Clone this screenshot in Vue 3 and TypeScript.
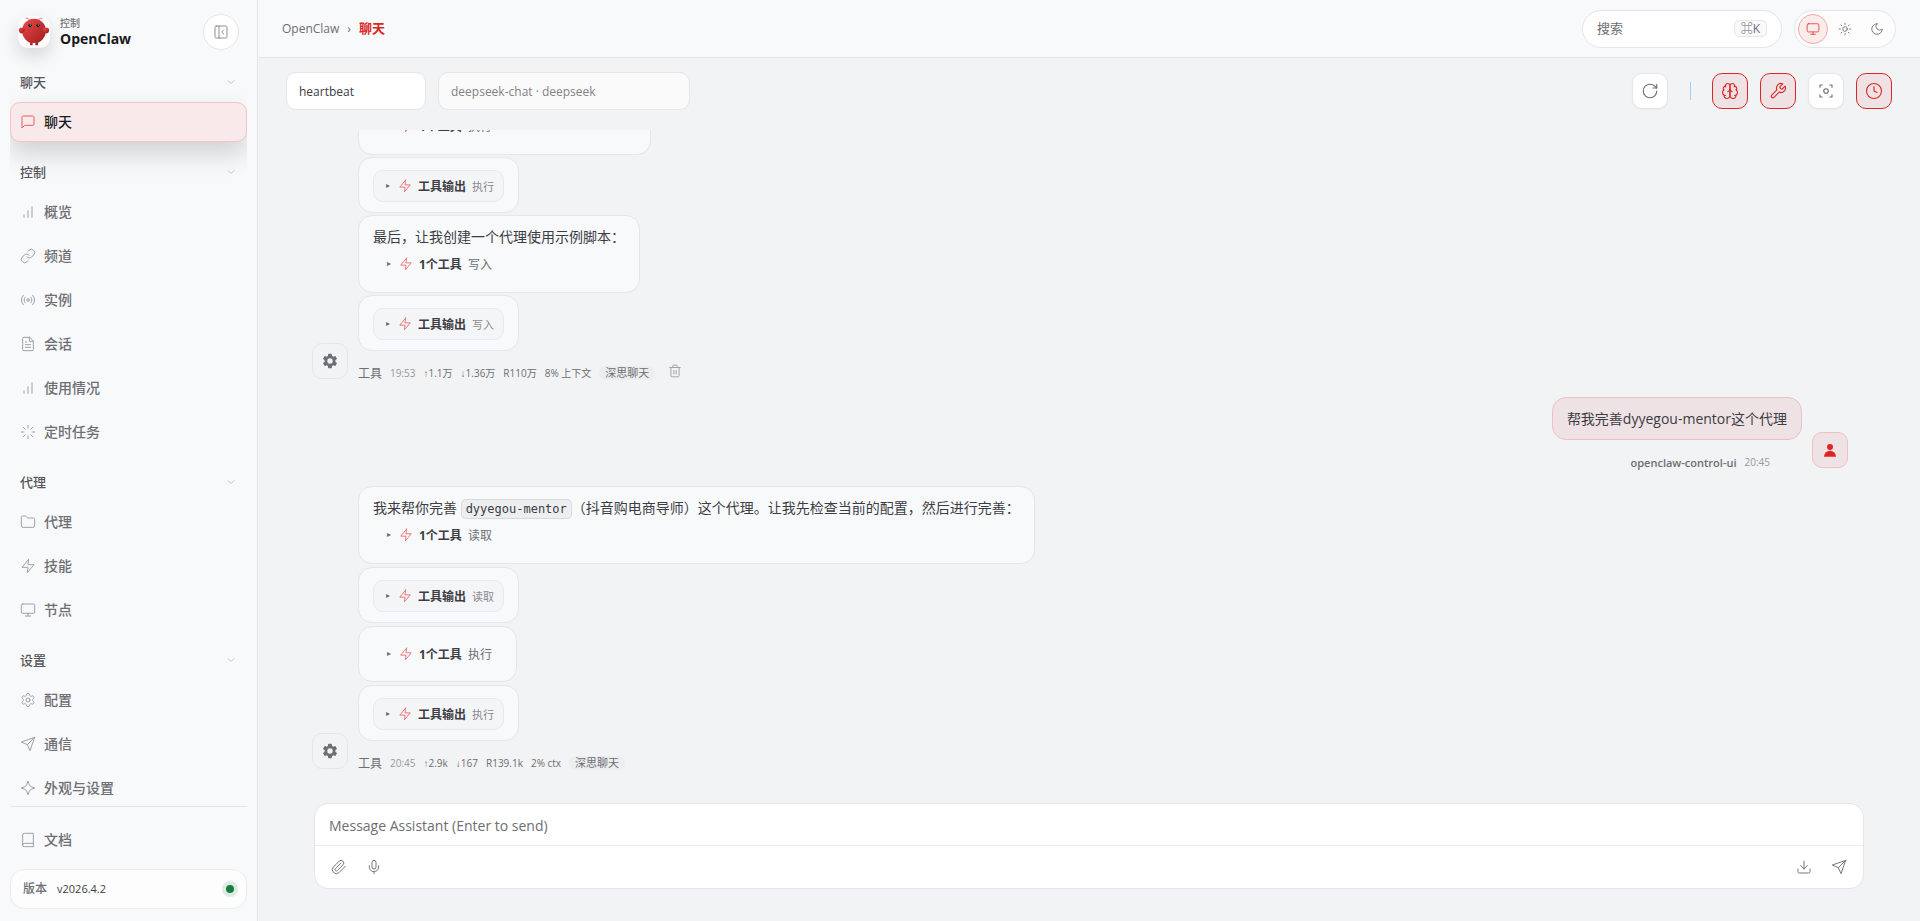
<script setup lang="ts">
import { ref } from 'vue'

interface NavItem { label: string; icon: string; active?: boolean }
interface NavSection { title: string; items: NavItem[] }
interface Tool { output: boolean; title: string; name: string }
interface Bubble { text?: string; code?: string; after?: string; wide?: boolean; tool?: Tool }
interface Group {
  user: boolean
  latest?: boolean
  deletable?: boolean
  name: string
  time: string
  stats: string[]
  model?: string
  bubbles: Bubble[]
}

const icons: Record<string, string> = {
  chat: '<path d="M21 15a2 2 0 0 1-2 2H7l-4 4V5a2 2 0 0 1 2-2h14a2 2 0 0 1 2 2z"/>',
  chart: '<path d="M12 20V10M18 20V4M6 20v-4"/>',
  link: '<path d="M10 13a5 5 0 0 0 7.54.54l3-3a5 5 0 0 0-7.07-7.07l-1.72 1.71"/><path d="M14 11a5 5 0 0 0-7.54-.54l-3 3a5 5 0 0 0 7.07 7.07l1.71-1.71"/>',
  radio: '<circle cx="12" cy="12" r="2"/><path d="M16.24 7.76a6 6 0 0 1 0 8.49m-8.48-.01a6 6 0 0 1 0-8.49m11.31-2.82a10 10 0 0 1 0 14.14m-14.14 0a10 10 0 0 1 0-14.14"/>',
  file: '<path d="M14.5 2H6a2 2 0 0 0-2 2v16a2 2 0 0 0 2 2h12a2 2 0 0 0 2-2V7.5L14.5 2z"/><path d="M14 2v6h6M16 13H8M16 17H8M10 9H8"/>',
  loader: '<path d="M12 2v4M12 18v4M4.93 4.93l2.83 2.83M16.24 16.24l2.83 2.83M2 12h4M18 12h4M4.93 19.07l2.83-2.83M16.24 7.76l2.83-2.83"/>',
  folder: '<path d="M20 20a2 2 0 0 0 2-2V8a2 2 0 0 0-2-2h-7.9a2 2 0 0 1-1.69-.9L9.6 3.9A2 2 0 0 0 7.93 3H4a2 2 0 0 0-2 2v13a2 2 0 0 0 2 2Z"/>',
  zap: '<path d="M13 2 3 14h9l-1 8 10-12h-9l1-8z"/>',
  monitor: '<rect x="2" y="3" width="20" height="14" rx="2"/><path d="M8 21h8M12 17v4"/>',
  settings: '<path d="M12.22 2h-.44a2 2 0 0 0-2 2v.18a2 2 0 0 1-1 1.73l-.43.25a2 2 0 0 1-2 0l-.15-.08a2 2 0 0 0-2.73.73l-.22.38a2 2 0 0 0 .73 2.73l.15.1a2 2 0 0 1 1 1.72v.51a2 2 0 0 1-1 1.74l-.15.09a2 2 0 0 0-.73 2.73l.22.38a2 2 0 0 0 2.73.73l.15-.08a2 2 0 0 1 2 0l.43.25a2 2 0 0 1 1 1.73V20a2 2 0 0 0 2 2h.44a2 2 0 0 0 2-2v-.18a2 2 0 0 1 1-1.73l.43-.25a2 2 0 0 1 2 0l.15.08a2 2 0 0 0 2.73-.73l.22-.39a2 2 0 0 0-.73-2.73l-.15-.08a2 2 0 0 1-1-1.74v-.5a2 2 0 0 1 1-1.74l.15-.09a2 2 0 0 0 .73-2.73l-.22-.38a2 2 0 0 0-2.73-.73l-.15.08a2 2 0 0 1-2 0l-.43-.25a2 2 0 0 1-1-1.73V4a2 2 0 0 0-2-2z"/><circle cx="12" cy="12" r="3"/>',
  send: '<path d="m22 2-7 20-4-9-9-4 20-7zM22 2 11 13"/>',
  spark: '<path d="M12 2l2.2 5.8c.3.9 1 1.6 1.9 1.9L22 12l-5.9 2.3c-.9.3-1.6 1-1.9 1.9L12 22l-2.2-5.8c-.3-.9-1-1.6-1.9-1.9L2 12l5.9-2.3c.9-.3 1.6-1 1.9-1.9z"/>',
  book: '<path d="M4 19.5v-15A2.5 2.5 0 0 1 6.5 2H20v20H6.5a2.5 2.5 0 0 1 0-5H20"/>',
  chevron: '<path d="m6 9 6 6 6-6"/>',
  panel: '<rect x="3" y="3" width="18" height="18" rx="2"/><path d="M9 3v18M16 15l-3-3 3-3"/>',
  sun: '<circle cx="12" cy="12" r="4"/><path d="M12 2v2M12 20v2M4.93 4.93l1.41 1.41M17.66 17.66l1.41 1.41M2 12h2M20 12h2M6.34 17.66l-1.41 1.41M19.07 4.93l-1.41 1.41"/>',
  moon: '<path d="M12 3a6 6 0 0 0 9 9 9 9 0 1 1-9-9z"/>',
  refresh: '<path d="M21 12a9 9 0 1 1-9-9c2.52 0 4.93 1 6.74 2.74L21 8"/><path d="M21 3v5h-5"/>',
  brain: '<path d="M12 5a3 3 0 1 0-5.997.125 4 4 0 0 0-2.526 5.77 4 4 0 0 0 .556 6.588A4 4 0 1 0 12 18Z"/><path d="M12 5a3 3 0 1 1 5.997.125 4 4 0 0 1 2.526 5.77 4 4 0 0 1-.556 6.588A4 4 0 1 1 12 18Z"/><path d="M15 13a4.5 4.5 0 0 1-3-4 4.5 4.5 0 0 1-3 4M17.6 6.5a3 3 0 0 0 .4-1.4M6 5.1a3 3 0 0 0 .4 1.4M3.5 10.9a4 4 0 0 1 .6-.4M19.9 10.5a4 4 0 0 1 .6.4M6 18a4 4 0 0 1-2-.5M20 17.5a4 4 0 0 1-2 .5"/>',
  wrench: '<path d="M14.7 6.3a1 1 0 0 0 0 1.4l1.6 1.6a1 1 0 0 0 1.4 0l3.77-3.77a6 6 0 0 1-7.94 7.94l-6.91 6.91a2.12 2.12 0 0 1-3-3l6.91-6.91a6 6 0 0 1 7.94-7.94l-3.76 3.76z"/>',
  focus: '<path d="M4 7V4h3M17 4h3v3M20 17v3h-3M7 20H4v-3"/><circle cx="12" cy="12" r="3"/>',
  clock: '<circle cx="12" cy="12" r="10"/><path d="M12 6v6l4 2"/>',
  trash: '<path d="M3 6h18M19 6v14a2 2 0 0 1-2 2H7a2 2 0 0 1-2-2V6M8 6V4a2 2 0 0 1 2-2h4a2 2 0 0 1 2 2v2M10 11v6M14 11v6"/>',
  clip: '<path d="m21.44 11.05-9.19 9.19a6 6 0 0 1-8.49-8.49l8.57-8.57A4 4 0 1 1 18 8.84l-8.59 8.57a2 2 0 0 1-2.83-2.83l8.49-8.48"/>',
  mic: '<path d="M12 2a3 3 0 0 0-3 3v7a3 3 0 0 0 6 0V5a3 3 0 0 0-3-3z"/><path d="M19 10v2a7 7 0 0 1-14 0v-2M12 19v3"/>',
  download: '<path d="M21 15v4a2 2 0 0 1-2 2H5a2 2 0 0 1-2-2v-4M7 10l5 5 5-5M12 15V3"/>',
}

const sections: NavSection[] = [
  { title: '聊天', items: [{ label: '聊天', icon: 'chat', active: true }] },
  {
    title: '控制',
    items: [
      { label: '概览', icon: 'chart' },
      { label: '频道', icon: 'link' },
      { label: '实例', icon: 'radio' },
      { label: '会话', icon: 'file' },
      { label: '使用情况', icon: 'chart' },
      { label: '定时任务', icon: 'loader' },
    ],
  },
  {
    title: '代理',
    items: [
      { label: '代理', icon: 'folder' },
      { label: '技能', icon: 'zap' },
      { label: '节点', icon: 'monitor' },
    ],
  },
  {
    title: '设置',
    items: [
      { label: '配置', icon: 'settings' },
      { label: '通信', icon: 'send' },
      { label: '外观与设置', icon: 'spark' },
    ],
  },
]

const themes = [
  { icon: 'monitor', label: '系统', active: true },
  { icon: 'sun', label: '浅色', active: false },
  { icon: 'moon', label: '深色', active: false },
]

const toggles = [
  { icon: 'brain', label: '思考', active: true },
  { icon: 'wrench', label: '工具', active: true },
  { icon: 'focus', label: '专注', active: false },
  { icon: 'clock', label: '定时', active: true },
]

const call = (name: string): Tool => ({ output: false, title: '1个工具', name })
const output = (name: string): Tool => ({ output: true, title: '工具输出', name })

const groups: Group[] = [
  {
    user: false,
    deletable: true,
    name: '工具',
    time: '19:53',
    stats: ['↑1.1万', '↓1.36万', 'R110万', '8% 上下文'],
    model: '深思聊天',
    bubbles: [
      { wide: true, tool: call('执行') },
      { tool: output('执行') },
      { text: '最后，让我创建一个代理使用示例脚本：', tool: call('写入') },
      { tool: output('写入') },
    ],
  },
  {
    user: true,
    name: 'openclaw-control-ui',
    time: '20:45',
    stats: [],
    bubbles: [{ text: '帮我完善dyyegou-mentor这个代理' }],
  },
  {
    user: false,
    latest: true,
    name: '工具',
    time: '20:45',
    stats: ['↑2.9k', '↓167', 'R139.1k', '2% ctx'],
    model: '深思聊天',
    bubbles: [
      {
        text: '我来帮你完善 ',
        code: 'dyyegou-mentor',
        after: '（抖音购电商导师）这个代理。让我先检查当前的配置，然后进行完善：',
        tool: call('读取'),
      },
      { tool: output('读取') },
      { tool: call('执行') },
      { tool: output('执行') },
    ],
  },
]

const draft = ref('')
</script>

<template>
  <div class="app">
    <aside class="sidebar">
      <header class="brand">
        <svg class="logo" viewBox="0 0 120 120" aria-hidden="true">
          <defs>
            <linearGradient id="shell" x1="0" y1="0" x2="1" y2="1">
              <stop offset="0" stop-color="#f04a4a" />
              <stop offset="1" stop-color="#991b1b" />
            </linearGradient>
          </defs>
          <g fill="url(#shell)">
            <path d="M60 10C30 10 15 35 15 55c0 20 15 40 30 45v10h10v-10s5 2 10 0v10h10v-10c15-5 30-25 30-45 0-20-15-45-45-45z" />
            <path d="M20 45C5 40 0 50 5 60c5 10 15 5 20-5 3-7 0-10-5-10z" />
            <path d="M100 45c15-5 20 5 15 15-5 10-15 5-20-5-3-7 0-10 5-10z" />
          </g>
          <path d="M45 15Q35 5 30 8M75 15Q85 5 90 8" fill="none" stroke="#ff4d4d" stroke-width="3" stroke-linecap="round" />
          <circle cx="45" cy="35" r="6" fill="#050810" /><circle cx="75" cy="35" r="6" fill="#050810" />
          <circle cx="46" cy="34" r="3" fill="#00e5cc" /><circle cx="76" cy="34" r="3" fill="#00e5cc" />
        </svg>
        <div class="brand-text">
          <span class="eyebrow">控制</span>
          <strong>OpenClaw</strong>
        </div>
        <button class="collapse" type="button" aria-label="折叠侧栏">
          <svg class="icon" viewBox="0 0 24 24" v-html="icons.panel" />
        </button>
      </header>

      <nav class="nav">
        <section v-for="s in sections" :key="s.title" class="nav-section">
          <button class="nav-title" type="button">
            <span>{{ s.title }}</span>
            <svg class="icon chevron" viewBox="0 0 24 24" v-html="icons.chevron" />
          </button>
          <div class="nav-items">
            <a v-for="i in s.items" :key="i.label" href="#" class="nav-item" :class="{ active: i.active }">
              <svg class="icon" viewBox="0 0 24 24" v-html="icons[i.icon]" />
              <span>{{ i.label }}</span>
            </a>
          </div>
        </section>
      </nav>

      <footer class="side-footer">
        <a href="#" class="nav-item">
          <svg class="icon" viewBox="0 0 24 24" v-html="icons.book" />
          <span>文档</span>
        </a>
        <div class="version">
          <span class="version-label">版本</span>
          <span>v2026.4.2</span>
          <i class="status" />
        </div>
      </footer>
    </aside>

    <div class="main">
      <header class="topbar">
        <div class="crumbs">
          <a href="#">OpenClaw</a>
          <span class="sep">›</span>
          <b>聊天</b>
        </div>
        <div class="top-actions">
          <button class="search" type="button">
            <span>搜索</span>
            <kbd>⌘K</kbd>
          </button>
          <div class="themes">
            <button v-for="t in themes" :key="t.icon" type="button" :aria-label="t.label" :class="{ active: t.active }">
              <svg class="icon" viewBox="0 0 24 24" v-html="icons[t.icon]" />
            </button>
          </div>
        </div>
      </header>

      <div class="controls">
        <select class="session" aria-label="会话"><option>heartbeat</option></select>
        <select class="model" aria-label="模型"><option>deepseek-chat · deepseek</option></select>
        <div class="buttons">
          <button class="square" type="button" aria-label="刷新">
            <svg class="icon" viewBox="0 0 24 24" v-html="icons.refresh" />
          </button>
          <span class="divider" />
          <button v-for="t in toggles" :key="t.icon" class="square" :class="{ active: t.active }" type="button" :aria-label="t.label">
            <svg class="icon" viewBox="0 0 24 24" v-html="icons[t.icon]" />
          </button>
        </div>
      </div>

      <main class="thread">
        <article v-for="(g, gi) in groups" :key="gi" class="group" :class="{ user: g.user, latest: g.latest }">
          <div class="avatar">
            <svg v-if="g.user" viewBox="0 0 24 24"><circle cx="12" cy="8" r="4" /><path d="M20 21a8 8 0 1 0-16 0z" /></svg>
            <svg v-else viewBox="0 0 24 24"><path d="M19.14 12.94c.04-.3.06-.61.06-.94s-.02-.64-.07-.94l2.03-1.58a.5.5 0 0 0 .12-.61l-1.92-3.32a.49.49 0 0 0-.59-.22l-2.39.96a7 7 0 0 0-1.62-.94l-.36-2.54a.48.48 0 0 0-.48-.41h-3.84a.48.48 0 0 0-.47.41l-.36 2.54a7.3 7.3 0 0 0-1.62.94l-2.39-.96a.48.48 0 0 0-.59.22L2.74 8.87a.47.47 0 0 0 .12.61l2.03 1.58c-.05.3-.09.63-.09.94s.02.64.07.94l-2.03 1.58a.5.5 0 0 0-.12.61l1.92 3.32c.12.22.37.29.59.22l2.39-.96c.5.38 1.03.7 1.62.94l.36 2.54c.05.24.24.41.48.41h3.84c.24 0 .44-.17.47-.41l.36-2.54a7.3 7.3 0 0 0 1.62-.94l2.39.96c.22.08.47 0 .59-.22l1.92-3.32a.47.47 0 0 0-.12-.61zM12 15.6A3.6 3.6 0 1 1 12 8.4a3.6 3.6 0 0 1 0 7.2z" /></svg>
          </div>
          <div class="stack">
            <div v-for="(b, bi) in g.bubbles" :key="bi" class="bubble" :class="{ wide: b.wide }">
              <p v-if="b.text">{{ b.text }}<code v-if="b.code">{{ b.code }}</code>{{ b.after }}</p>
              <details v-if="b.tool" class="tool" :class="{ output: b.tool.output }">
                <summary>
                  <span class="arrow">▸</span>
                  <svg class="icon" viewBox="0 0 24 24" v-html="icons.zap" />
                  <b>{{ b.tool.title }}</b>
                  <span class="tool-name">{{ b.tool.name }}</span>
                </summary>
              </details>
            </div>
            <div class="meta">
              <span class="who">{{ g.name }}</span>
              <time>{{ g.time }}</time>
              <span v-for="st in g.stats" :key="st">{{ st }}</span>
              <span v-if="g.model" class="pill">{{ g.model }}</span>
              <button v-if="g.deletable" type="button" aria-label="删除">
                <svg class="icon" viewBox="0 0 24 24" v-html="icons.trash" />
              </button>
            </div>
          </div>
        </article>
      </main>

      <form class="composer" @submit.prevent>
        <textarea v-model="draft" rows="1" aria-label="消息" placeholder="Message Assistant (Enter to send)" />
        <div class="composer-bar">
          <button type="button" aria-label="附件"><svg class="icon" viewBox="0 0 24 24" v-html="icons.clip" /></button>
          <button type="button" aria-label="语音"><svg class="icon" viewBox="0 0 24 24" v-html="icons.mic" /></button>
          <span class="spacer" />
          <button type="button" aria-label="导出"><svg class="icon" viewBox="0 0 24 24" v-html="icons.download" /></button>
          <button type="submit" aria-label="发送"><svg class="icon" viewBox="0 0 24 24" v-html="icons.send" /></button>
        </div>
      </form>
    </div>
  </div>
</template>

<style>
body {
  margin: 0;
  background: #f1f3f5;
}
</style>

<style scoped>
* {
  box-sizing: border-box;
}
.app {
  --line: #e5e5ea;
  --muted: #6e6e73;
  --accent: #dc2626;
  display: flex;
  height: 100vh;
  overflow: hidden;
  color: #3c3c43;
  font: 14px/21px "Open Sans", "Noto Sans CJK SC", sans-serif;
}
button,
select,
textarea {
  font: inherit;
  color: inherit;
  margin: 0;
  padding: 0;
  border: 0;
  background: none;
}
a {
  color: inherit;
  text-decoration: none;
}
.icon {
  display: block;
  flex: none;
  width: 16px;
  height: 16px;
  fill: none;
  stroke: currentColor;
  stroke-width: 1.5;
  stroke-linecap: round;
  stroke-linejoin: round;
}

/* Sidebar */
.sidebar {
  display: flex;
  flex-direction: column;
  flex: none;
  width: 258px;
  padding: 14px 10px 12px;
  border-right: 1px solid var(--line);
  background: #f8f9fb;
}
.brand {
  display: flex;
  align-items: center;
  gap: 10px;
  height: 36px;
  padding: 0 8px;
}
.logo {
  width: 32px;
  height: 32px;
  border-radius: 10px;
  background: #fcfcfd;
  box-shadow: 0 8px 18px rgba(0, 0, 0, 0.14);
}
.brand-text {
  display: flex;
  flex: 1;
  flex-direction: column;
}
.eyebrow {
  color: var(--muted);
  font-size: 10px;
  font-weight: 500;
  line-height: 14px;
}
.brand-text strong {
  color: #1a1a1e;
  font-size: 14px;
  line-height: 18px;
}
.collapse {
  display: grid;
  place-items: center;
  width: 36px;
  height: 36px;
  border: 1px solid var(--line);
  border-radius: 50%;
  background: #fff;
  color: #8e8e93;
}
.nav {
  display: flex;
  flex: 1;
  flex-direction: column;
  gap: 16px;
  min-height: 0;
  padding-top: 18px;
  overflow: hidden;
}
.nav-section {
  display: flex;
  flex: none;
  flex-direction: column;
  gap: 6px;
}
.nav-title {
  display: flex;
  align-items: center;
  justify-content: space-between;
  height: 28px;
  padding: 0 10px;
  color: #55555a;
  font-size: 13px;
  font-weight: 500;
}
.chevron {
  width: 12px;
  height: 12px;
  color: #b4b4b9;
}
.nav-items {
  display: flex;
  flex-direction: column;
  gap: 4px;
}
.nav-item {
  display: flex;
  flex: none;
  align-items: center;
  gap: 8px;
  height: 40px;
  padding: 0 9px;
  border: 1px solid transparent;
  border-radius: 10px;
  color: var(--muted);
  font-size: 14px;
  font-weight: 500;
}
.nav-item span,
.version span {
  padding-bottom: 2px;
}
.nav-item .icon {
  color: #a0a0a5;
}
.nav-item.active {
  border-color: #f3c3c5;
  background: #f8eaeb;
  box-shadow: 0 12px 26px rgba(0, 0, 0, 0.16);
  color: #1a1a1e;
}
.nav-item.active .icon {
  color: #e25d5f;
}
.side-footer {
  display: flex;
  flex-direction: column;
  gap: 9px;
  padding-top: 13px;
  border-top: 1px solid var(--line);
}
.version {
  display: flex;
  align-items: center;
  gap: 10px;
  height: 40px;
  padding: 0 8px 0 12px;
  border: 1px solid #ebebee;
  border-radius: 14px;
  background: #fdfdfd;
  font-size: 11px;
}
.version-label {
  color: var(--muted);
  font-size: 12px;
  font-weight: 500;
}
.status {
  width: 16px;
  height: 16px;
  margin-left: auto;
  border: 4px solid #dfece4;
  border-radius: 50%;
  background: #15803d;
}

/* Top bar */
.main {
  display: flex;
  flex: 1;
  flex-direction: column;
  min-width: 0;
  background: #f1f3f5;
}
.topbar {
  display: flex;
  flex: none;
  align-items: center;
  justify-content: space-between;
  height: 58px;
  padding: 0 24px;
  border-bottom: 1px solid var(--line);
  background: #f8f9fb;
}
.crumbs {
  display: flex;
  align-items: center;
  gap: 8px;
  color: var(--muted);
  font-size: 12px;
}
.crumbs b {
  color: var(--accent);
  font-size: 13px;
}
.top-actions {
  display: flex;
  gap: 12px;
}
.search {
  display: flex;
  align-items: center;
  justify-content: space-between;
  width: 200px;
  height: 38px;
  padding: 0 14px;
  border: 1px solid var(--line);
  border-radius: 19px;
  background: #fff;
  color: var(--muted);
  font-size: 13px;
}
kbd {
  padding: 0 6px;
  border: 1px solid var(--line);
  border-radius: 5px;
  background: #f8f9fb;
  font: 12px/15px "Open Sans", "Noto Sans CJK SC", sans-serif;
}
.themes {
  display: flex;
  align-items: center;
  gap: 2px;
  height: 38px;
  padding: 0 3px;
  border: 1px solid var(--line);
  border-radius: 19px;
  background: #fdfdfe;
}
.themes button {
  display: grid;
  place-items: center;
  width: 30px;
  height: 30px;
  border: 1px solid transparent;
  border-radius: 50%;
  color: var(--muted);
}
.themes button.active {
  border-color: #f1a9aa;
  background: #fbecec;
  color: #e04344;
}
.themes .icon {
  width: 14px;
  height: 14px;
}

/* Chat controls */
.controls {
  display: flex;
  flex: none;
  align-items: center;
  gap: 12px;
  padding: 14px 28px 20px;
}
select {
  height: 38px;
  padding: 0 12px;
  border: 1px solid var(--line);
  border-radius: 10px;
  appearance: none;
  background: #fff;
  font-size: 12px;
}
.session {
  width: 140px;
}
.model {
  width: 252px;
  background: #fafafa;
  color: #828287;
}
.buttons {
  display: flex;
  align-items: center;
  gap: 12px;
  margin-left: auto;
}
.square {
  display: grid;
  place-items: center;
  width: 36px;
  height: 36px;
  border: 1px solid var(--line);
  border-radius: 10px;
  background: #fff;
  box-shadow: 0 1px 2px rgba(0, 0, 0, 0.04);
  color: var(--muted);
}
.square .icon {
  width: 18px;
  height: 18px;
}
.square.active {
  border-color: var(--accent);
  background: #efe2e4;
  box-shadow: none;
  color: var(--accent);
}
.divider {
  width: 1px;
  height: 18px;
  margin: 0 9px 0 10px;
  background: #a9cde8;
}

/* Messages */
.thread {
  display: flex;
  flex: 1;
  flex-direction: column;
  justify-content: flex-end;
  gap: 14px;
  min-height: 0;
  padding: 0 72px 30px 54px;
  overflow: hidden;
}
.group {
  display: flex;
  flex: none;
  align-items: flex-end;
  gap: 10px;
}
.group.user {
  flex-direction: row-reverse;
}
.avatar {
  display: grid;
  flex: none;
  place-items: center;
  width: 36px;
  height: 36px;
  margin-bottom: 4px;
  border: 1px solid var(--line);
  border-radius: 10px;
  color: var(--muted);
}
.avatar svg {
  width: 18px;
  height: 18px;
  fill: currentColor;
}
.user .avatar {
  border-color: #efbfc2;
  background: #efe2e4;
  color: var(--accent);
}
.stack {
  display: flex;
  flex-direction: column;
  align-items: flex-start;
  gap: 2px;
}
.latest .stack {
  gap: 3px;
}
.user .stack {
  align-items: flex-end;
}
.bubble {
  padding: 10px 14px;
  border: 1px solid var(--line);
  border-radius: 14px;
  background: #f8f9fb;
}
.bubble.wide {
  min-width: 293px;
}
.user .bubble {
  border-color: #efbfc2;
  background: #efe2e4;
}
.bubble p {
  margin: 0;
}
code {
  padding: 2px 4px;
  border: 1px solid #d8d9db;
  border-radius: 5px;
  background: #eceef0;
  font: 12px/12px "DejaVu Sans Mono", monospace;
}
.tool {
  margin: 1px 0;
  border: 1px solid transparent;
  border-radius: 10px;
}
.wide .tool,
p + .tool {
  margin-bottom: 2px;
}
.tool.output {
  margin: 2px 0 0;
  border-color: #e9e9ed;
  background: #f4f5f7;
}
summary {
  display: flex;
  align-items: center;
  gap: 6px;
  height: 30px;
  padding: 0 9px 0 13px;
  font-size: 12px;
  list-style: none;
}
.output summary {
  padding: 0 9px 0 12px;
}
summary .icon {
  width: 14px;
  height: 14px;
  color: #e8696b;
}
.arrow {
  width: 6px;
  color: var(--muted);
  font: 8px/12px "DejaVu Sans", sans-serif;
}
.tool-name {
  color: var(--muted);
}
.output .tool-name {
  color: #8a8a8f;
  font-size: 11px;
}
.meta {
  display: flex;
  align-items: center;
  gap: 8px;
  height: 20px;
  margin-top: 10px;
  color: var(--muted);
  font-family: "Open Sans", "Liberation Sans", "Noto Sans CJK SC", sans-serif;
  font-size: 10px;
  white-space: nowrap;
}
.latest .meta {
  margin-top: 9px;
}
.user .meta {
  padding-right: 32px;
}
.who {
  font-size: 12px;
}
.user .who {
  font-size: 11px;
  font-weight: 600;
}
time {
  color: #98989d;
}
.pill {
  padding: 0 6px;
  border-radius: 7px;
  background: #ebedef;
  font-size: 11px;
  line-height: 14px;
}
.meta button {
  display: grid;
  place-items: center;
  width: 24px;
  height: 20px;
  padding-bottom: 4px;
  color: #98989d;
}
.meta .icon {
  width: 14px;
  height: 14px;
}

/* Composer */
.composer {
  flex: none;
  margin: 0 56px 32px;
  border: 1px solid var(--line);
  border-radius: 14px;
  background: #fff;
  overflow: hidden;
}
textarea {
  display: block;
  width: 100%;
  height: 41px;
  padding: 11px 14px 9px;
  outline: 0;
  resize: none;
}
textarea::placeholder {
  color: var(--muted);
  opacity: 1;
}
.composer-bar {
  display: flex;
  align-items: center;
  gap: 3px;
  height: 43px;
  padding: 0 8px;
  border-top: 1px solid #ededf0;
}
.composer-bar button {
  display: grid;
  place-items: center;
  width: 32px;
  height: 32px;
  color: #77777c;
}
.spacer {
  flex: 1;
}
</style>
